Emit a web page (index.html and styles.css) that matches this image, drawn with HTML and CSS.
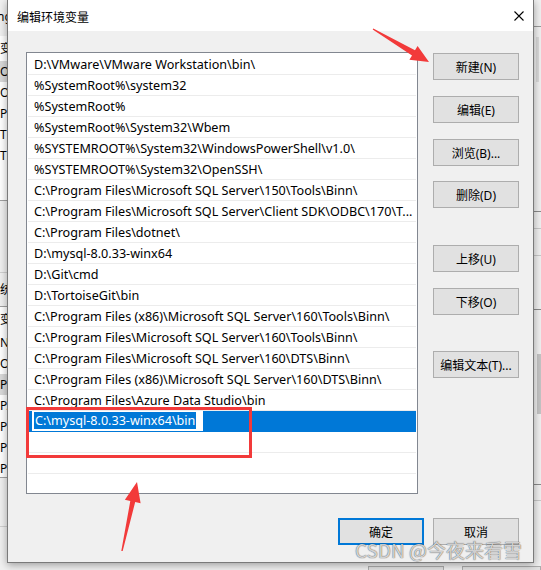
FILE: index.html
```html
<!DOCTYPE html>
<html lang="zh-CN">
<head>
<meta charset="utf-8">
<title>编辑环境变量</title>
<link rel="stylesheet" href="styles.css">
</head>
<body>
<div class="desk">
  <div class="back-left">
    <div class="bl-top"><span class="cut3">ng</span></div>
    <div class="bl-list">
      <div class="bl-head">变量</div>
      <div class="bl-row sel">OneDrive</div>
      <div class="bl-row">OneDriveConsumer</div>
      <div class="bl-row">Path</div>
      <div class="bl-row">TEMP</div>
      <div class="bl-row">TMP</div>
    </div>
    <div class="bl-gap"></div>
    <div class="bl-label"><span class="cut12">系统变量(S)</span></div>
    <div class="bl-list2">
      <div class="bl-head">变量</div>
      <div class="bl-row">NUMBER_OF_PROCESSORS</div>
      <div class="bl-row">OS</div>
      <div class="bl-row sel">Path</div>
      <div class="bl-row">PATHEXT</div>
      <div class="bl-row">PROCESSOR_ARCHITECTURE</div>
      <div class="bl-row">PROCESSOR_IDENTIFIER</div>
      <div class="bl-row">PROCESSOR_LEVEL</div>
    </div>
    <div class="bl-gap2"></div>
  </div>
  <div class="back-right">
    <div class="br-a"></div>
    <div class="br-scroll"></div>
    <div class="br-b"></div>
    <div class="br-c"></div>
    <div class="br-d"></div>
    <div class="br-e"></div>
    <div class="br-thumb"></div>
    <div class="br-f"></div>
    <div class="br-g"></div>
  </div>
  <div class="back-bottom">
    <div class="bb-btn bb1"></div>
    <div class="bb-btn bb2"></div>
  </div>
</div>

<div class="dialog">
  <div class="titlebar">
    <span class="title">编辑环境变量</span>
    <svg class="close" width="10" height="10" viewBox="0 0 10 10"><path d="M0.5 0.5L9.5 9.5M9.5 0.5L0.5 9.5" stroke="#000" stroke-width="1.1" fill="none"/></svg>
  </div>
  <div class="body">
    <div class="list">
      <div class="row">D:\VMware\VMware Workstation\bin\</div>
      <div class="row">%SystemRoot%\system32</div>
      <div class="row">%SystemRoot%</div>
      <div class="row">%SystemRoot%\System32\Wbem</div>
      <div class="row">%SYSTEMROOT%\System32\WindowsPowerShell\v1.0\</div>
      <div class="row">%SYSTEMROOT%\System32\OpenSSH\</div>
      <div class="row">C:\Program Files\Microsoft SQL Server\150\Tools\Binn\</div>
      <div class="row">C:\Program Files\Microsoft SQL Server\Client SDK\ODBC\170\T...</div>
      <div class="row">C:\Program Files\dotnet\</div>
      <div class="row">D:\mysql-8.0.33-winx64</div>
      <div class="row">D:\Git\cmd</div>
      <div class="row">D:\TortoiseGit\bin</div>
      <div class="row">C:\Program Files (x86)\Microsoft SQL Server\160\Tools\Binn\</div>
      <div class="row">C:\Program Files\Microsoft SQL Server\160\Tools\Binn\</div>
      <div class="row">C:\Program Files\Microsoft SQL Server\160\DTS\Binn\</div>
      <div class="row">C:\Program Files (x86)\Microsoft SQL Server\160\DTS\Binn\</div>
      <div class="row">C:\Program Files\Azure Data Studio\bin</div>
      <div class="row selected"><div class="editbox"><span class="seltext">C:\mysql-8.0.33-winx64\bin</span></div></div>
      <div class="row"></div>
      <div class="row"></div>
      <div class="row last"></div>
    </div>
    <div class="side">
      <div class="btn b-new">新建(N)</div>
      <div class="btn b-edit">编辑(E)</div>
      <div class="btn b-browse">浏览(B)...</div>
      <div class="btn b-del">删除(D)</div>
      <div class="btn b-up">上移(U)</div>
      <div class="btn b-down">下移(O)</div>
      <div class="btn b-text">编辑文本(T)...</div>
    </div>
    <div class="footer">
      <div class="btn ok">确定</div>
      <div class="btn">取消</div>
    </div>
  </div>
</div>

<div class="redbox"></div>
<svg class="arrows" width="541" height="570" viewBox="0 0 541 570">
  <polygon fill="#f23a3a" points="373.3,28.6 415.0,50.3 417.6,46.0 429,62 409.4,59.8 412,55.5 372.7,29.4"/>
  <polygon fill="#f23a3a" points="122.7,551.1 135.2,502.0 140.6,503.2 137,482 124.9,499.8 130.3,501.0 121.3,550.9"/>
</svg>
<div class="watermark">CSDN @今夜来看雪</div>
</body>
</html>
```

FILE: styles.css
```css
* { box-sizing: border-box; }
html, body {
  margin: 0;
  padding: 0;
  width: 541px;
  height: 570px;
  overflow: hidden;
}
body {
  position: relative;
  background: #f0f0f0;
  font-family: "Noto Sans", "Noto Sans CJK SC", sans-serif;
  font-size: 12px;
  color: #000;
}

/* background window (desktop) */
.desk {
  position: absolute;
  left: 0;
  top: 0;
  width: 541px;
  height: 570px;
  background: #f0f0f0;
}
.back-left {
  position: absolute;
  left: 0;
  top: 0;
  width: 8px;
  height: 570px;
  overflow: hidden;
  display: flex;
  flex-direction: column;
  white-space: nowrap;
  font-size: 12px;
}
.bl-top { height: 36px; line-height: 34px; }
.cut3 { margin-left: -3px; }
.cut12 { margin-left: -12px; }
.bl-list {
  height: 165px;
  background: #fff;
  border-bottom: 1px solid #a0a0a0;
}
.bl-head { height: 25px; line-height: 25px; }
.bl-row { height: 21px; line-height: 21px; }
.bl-row.sel { background: #d9d9d9; }
.bl-gap { height: 72px; border-bottom: 1px solid #d0d0d0; }
.bl-label { height: 34px; line-height: 34px; border-bottom: 1px solid #a0a0a0; }
.bl-list2 {
  height: 171px;
  background: #fff;
  border-bottom: 1px solid #a0a0a0;
}
.bl-gap2 { height: 49px; border-bottom: 1px solid #d0d0d0; }

.back-right {
  position: absolute;
  left: 534px;
  top: 0;
  width: 7px;
  height: 570px;
  display: flex;
  flex-direction: column;
}
.br-a { height: 27px; border-bottom: 1px solid #9a9a9a; }
.br-scroll { margin: 10px 0 0 2px; width: 3px; height: 45px; background: #dadada; }
.br-b { height: 130px; border-bottom: 1px solid #8a8a8a; }
.br-c { height: 17px; border-bottom: 1px solid #c8c8c8; }
.br-d { height: 27px; border-bottom: 1px solid #c8c8c8; }
.br-e { height: 54px; border-bottom: 1px solid #8a8a8a; }
.br-thumb { margin: 44px 0 0 3px; width: 4px; height: 60px; background: #c4c4c4; }
.br-f { height: 71px; border-bottom: 1px solid #8a8a8a; }
.br-g { height: 16px; border-bottom: 1px solid #c8c8c8; }

.back-bottom {
  position: absolute;
  left: 0;
  top: 563px;
  width: 541px;
  height: 7px;
  display: flex;
  padding-top: 3px;
}
.bb-btn {
  height: 20px;
  background: #e1e1e1;
  border: 1px solid #adadad;
}
.bb1 { margin-left: 368px; width: 77px; }
.bb2 { margin-left: 18px; width: 80px; }

/* dialog */
.dialog {
  position: absolute;
  left: 7px;
  top: 0;
  width: 527px;
  height: 563px;
  background: #f0f0f0;
  border: 1px solid #7a7a7a;
  border-top: 0;
  box-shadow: 0 2px 8px rgba(0, 0, 0, 0.35);
  display: flex;
  flex-direction: column;
}
.titlebar {
  height: 31px;
  background: #fff;
  display: flex;
  align-items: center;
  justify-content: space-between;
  padding: 0 9px 0 9px;
}
.title {
  font-family: "Noto Sans CJK SC", sans-serif;
  font-size: 12px;
  color: #000;
  margin-top: 1px;
}
.close { display: block; margin-top: 0; }

.body {
  flex: 1;
  display: grid;
  grid-template-columns: 392px 86px;
  grid-template-rows: 442px 27px;
  column-gap: 15px;
  row-gap: 24px;
  padding: 21px 14px 17px 18px;
}
.list {
  background: #fff;
  border: 1px solid #828790;
  padding-top: 1px;
  overflow: hidden;
  display: flex;
  flex-direction: column;
  font-size: 12.6px;
}
.row {
  flex: none;
  height: 21px;
  margin: 0 1px;
  padding-left: 6px;
  padding-top: 1px;
  border-bottom: 1px solid #ececec;
  line-height: 20px;
  white-space: nowrap;
  overflow: hidden;
}
.row.last { border-bottom: 0; }
.row.selected {
  background: #0078d7;
  border-bottom-color: #0078d7;
  padding-left: 4px;
  padding-top: 0;
}
.editbox {
  width: 171px;
  height: 20px;
  background: #fff;
  padding: 1px 0 0 2px;
  line-height: 18px;
}
.seltext {
  display: inline-block;
  background: #0078d7;
  color: #fff;
  height: 17px;
  line-height: 18px;
  padding: 0 1px;
}

.side {
  display: flex;
  flex-direction: column;
  padding-top: 1px;
}
.btn {
  height: 27px;
  background: #e1e1e1;
  border: 1px solid #adadad;
  display: flex;
  align-items: center;
  justify-content: center;
  white-space: nowrap;
  font-size: 12px;
}
.side .btn { flex: none; }
.b-edit, .b-browse, .b-down { margin-top: 16px; }
.b-del { margin-top: 15px; }
.b-up { margin-top: 37px; }
.b-text { margin-top: 36px; }

.footer {
  grid-column: 1 / 3;
  display: flex;
  justify-content: flex-end;
  gap: 9px;
}
.footer .btn { width: 86px; }
.btn.ok { border: 2px solid #0078d7; }

/* annotations */
.redbox {
  position: absolute;
  left: 26px;
  top: 407px;
  width: 226px;
  height: 51px;
  border: 3px solid #f23a3a;
}
.arrows {
  position: absolute;
  left: 0;
  top: 0;
}
.watermark {
  position: absolute;
  left: 355px;
  top: 536px;
  font-family: "Noto Sans CJK SC", sans-serif;
  font-size: 19px;
  color: rgba(255, 255, 255, 0.75);
  text-shadow: 0 0 1px rgba(0, 0, 0, 0.5), 0 0 1px rgba(0, 0, 0, 0.5);
  white-space: nowrap;
}
```
